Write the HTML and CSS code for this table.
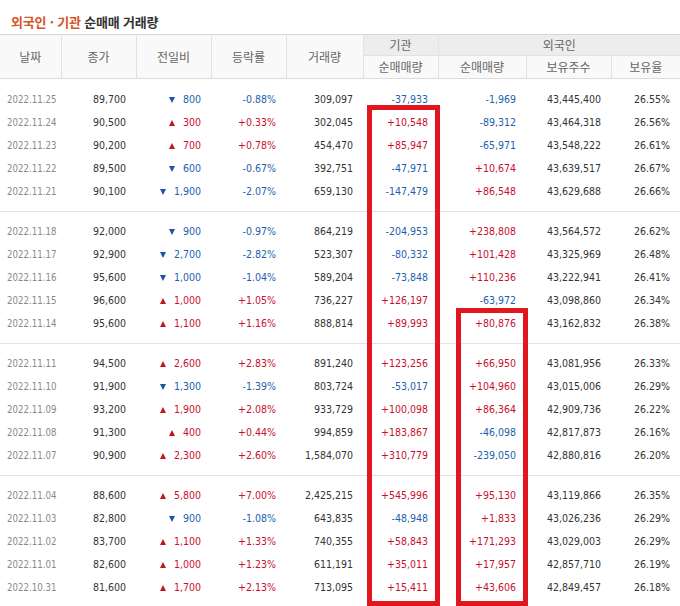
FILE: index.html
```html
<!DOCTYPE html>
<html lang="ko">
<head>
<meta charset="utf-8">
<title>외국인 · 기관 순매매 거래량</title>
<link rel="stylesheet" href="styles.css">
</head>
<body>
<div class="page">
  <h2 class="title"><span class="accent">외국인 · 기관</span> 순매매 거래량</h2>
  <table class="trade">
    <colgroup>
      <col class="c-date"><col class="c-close"><col class="c-diff"><col class="c-rate"><col class="c-vol">
      <col class="c-inst"><col class="c-fnet"><col class="c-hold"><col class="c-ratio">
    </colgroup>
    <thead>
      <tr class="h1">
        <th rowspan="2">날짜</th><th rowspan="2">종가</th><th rowspan="2">전일비</th><th rowspan="2">등락률</th><th rowspan="2">거래량</th>
        <th class="grp">기관</th><th class="grp" colspan="3">외국인</th>
      </tr>
      <tr class="h2">
        <th>순매매량</th><th>순매매량</th><th>보유주수</th><th>보유율</th>
      </tr>
    </thead>
    <tbody>
      <tr class="gap"><td colspan="9"></td></tr>
      <tr><td class="date">2022.11.25</td><td>89,700</td><td class="dn"><i class="tri-dn"></i>800</td><td class="dn">-0.88%</td><td>309,097</td><td class="dn">-37,933</td><td class="dn">-1,969</td><td>43,445,400</td><td>26.55%</td></tr>
      <tr><td class="date">2022.11.24</td><td>90,500</td><td class="up"><i class="tri-up"></i>300</td><td class="up">+0.33%</td><td>302,045</td><td class="up">+10,548</td><td class="dn">-89,312</td><td>43,464,318</td><td>26.56%</td></tr>
      <tr><td class="date">2022.11.23</td><td>90,200</td><td class="up"><i class="tri-up"></i>700</td><td class="up">+0.78%</td><td>454,470</td><td class="up">+85,947</td><td class="dn">-65,971</td><td>43,548,222</td><td>26.61%</td></tr>
      <tr><td class="date">2022.11.22</td><td>89,500</td><td class="dn"><i class="tri-dn"></i>600</td><td class="dn">-0.67%</td><td>392,751</td><td class="dn">-47,971</td><td class="up">+10,674</td><td>43,639,517</td><td>26.67%</td></tr>
      <tr><td class="date">2022.11.21</td><td>90,100</td><td class="dn"><i class="tri-dn"></i>1,900</td><td class="dn">-2.07%</td><td>659,130</td><td class="dn">-147,479</td><td class="up">+86,548</td><td>43,629,688</td><td>26.66%</td></tr>
      <tr class="sep"><td colspan="9"><div class="line"></div></td></tr>
      <tr><td class="date">2022.11.18</td><td>92,000</td><td class="dn"><i class="tri-dn"></i>900</td><td class="dn">-0.97%</td><td>864,219</td><td class="dn">-204,953</td><td class="up">+238,808</td><td>43,564,572</td><td>26.62%</td></tr>
      <tr><td class="date">2022.11.17</td><td>92,900</td><td class="dn"><i class="tri-dn"></i>2,700</td><td class="dn">-2.82%</td><td>523,307</td><td class="dn">-80,332</td><td class="up">+101,428</td><td>43,325,969</td><td>26.48%</td></tr>
      <tr><td class="date">2022.11.16</td><td>95,600</td><td class="dn"><i class="tri-dn"></i>1,000</td><td class="dn">-1.04%</td><td>589,204</td><td class="dn">-73,848</td><td class="up">+110,236</td><td>43,222,941</td><td>26.41%</td></tr>
      <tr><td class="date">2022.11.15</td><td>96,600</td><td class="up"><i class="tri-up"></i>1,000</td><td class="up">+1.05%</td><td>736,227</td><td class="up">+126,197</td><td class="dn">-63,972</td><td>43,098,860</td><td>26.34%</td></tr>
      <tr><td class="date">2022.11.14</td><td>95,600</td><td class="up"><i class="tri-up"></i>1,100</td><td class="up">+1.16%</td><td>888,814</td><td class="up">+89,993</td><td class="up">+80,876</td><td>43,162,832</td><td>26.38%</td></tr>
      <tr class="sep"><td colspan="9"><div class="line"></div></td></tr>
      <tr><td class="date">2022.11.11</td><td>94,500</td><td class="up"><i class="tri-up"></i>2,600</td><td class="up">+2.83%</td><td>891,240</td><td class="up">+123,256</td><td class="up">+66,950</td><td>43,081,956</td><td>26.33%</td></tr>
      <tr><td class="date">2022.11.10</td><td>91,900</td><td class="dn"><i class="tri-dn"></i>1,300</td><td class="dn">-1.39%</td><td>803,724</td><td class="dn">-53,017</td><td class="up">+104,960</td><td>43,015,006</td><td>26.29%</td></tr>
      <tr><td class="date">2022.11.09</td><td>93,200</td><td class="up"><i class="tri-up"></i>1,900</td><td class="up">+2.08%</td><td>933,729</td><td class="up">+100,098</td><td class="up">+86,364</td><td>42,909,736</td><td>26.22%</td></tr>
      <tr><td class="date">2022.11.08</td><td>91,300</td><td class="up"><i class="tri-up"></i>400</td><td class="up">+0.44%</td><td>994,859</td><td class="up">+183,867</td><td class="dn">-46,098</td><td>42,817,873</td><td>26.16%</td></tr>
      <tr><td class="date">2022.11.07</td><td>90,900</td><td class="up"><i class="tri-up"></i>2,300</td><td class="up">+2.60%</td><td>1,584,070</td><td class="up">+310,779</td><td class="dn">-239,050</td><td>42,880,816</td><td>26.20%</td></tr>
      <tr class="sep"><td colspan="9"><div class="line"></div></td></tr>
      <tr><td class="date">2022.11.04</td><td>88,600</td><td class="up"><i class="tri-up"></i>5,800</td><td class="up">+7.00%</td><td>2,425,215</td><td class="up">+545,996</td><td class="up">+95,130</td><td>43,119,866</td><td>26.35%</td></tr>
      <tr><td class="date">2022.11.03</td><td>82,800</td><td class="dn"><i class="tri-dn"></i>900</td><td class="dn">-1.08%</td><td>643,835</td><td class="dn">-48,948</td><td class="up">+1,833</td><td>43,026,236</td><td>26.29%</td></tr>
      <tr><td class="date">2022.11.02</td><td>83,700</td><td class="up"><i class="tri-up"></i>1,100</td><td class="up">+1.33%</td><td>740,355</td><td class="up">+58,843</td><td class="up">+171,293</td><td>43,029,003</td><td>26.29%</td></tr>
      <tr><td class="date">2022.11.01</td><td>82,600</td><td class="up"><i class="tri-up"></i>1,000</td><td class="up">+1.23%</td><td>611,191</td><td class="up">+35,011</td><td class="up">+17,957</td><td>42,857,710</td><td>26.19%</td></tr>
      <tr><td class="date">2022.10.31</td><td>81,600</td><td class="up"><i class="tri-up"></i>1,700</td><td class="up">+2.13%</td><td>713,095</td><td class="up">+15,411</td><td class="up">+43,606</td><td>42,849,457</td><td>26.18%</td></tr>
      <tr class="gap"><td colspan="9"></td></tr>
    </tbody>
  </table>
  <div class="mark mark-inst"></div>
  <div class="mark mark-foreign"></div>
</div>
</body>
</html>
```

FILE: styles.css
```css
html, body {
  margin: 0;
  padding: 0;
  background: #fff;
}
.page {
  position: relative;
  width: 680px;
}
.title {
  margin: 0;
  height: 34px;
  box-sizing: border-box;
  padding: 13px 0 0 11px;
  font-family: "Noto Sans CJK KR", "Noto Sans", sans-serif;
  font-size: 13px;
  line-height: 18px;
  font-weight: 700;
  color: #333;
  letter-spacing: -0.2px;
}
.title .accent {
  color: #d4552a;
}
.trade {
  width: 680px;
  border-collapse: collapse;
  table-layout: fixed;
  font-family: "DejaVu Sans Condensed", "DejaVu Sans", sans-serif;
  font-size: 10.5px;
  color: #333;
}
.c-date { width: 61px; }
.c-close { width: 75px; }
.c-diff { width: 75px; }
.c-rate { width: 75px; }
.c-vol { width: 77px; }
.c-inst { width: 75px; }
.c-fnet { width: 88px; }
.c-hold { width: 85px; }
.c-ratio { width: 69px; }

.trade thead th {
  font-family: "Noto Sans CJK KR", sans-serif;
  font-weight: 400;
  font-size: 12px;
  color: #666;
  background: #f9f9f9;
  border: 1px solid #e2e2e2;
  border-top-color: #d6d6d6;
  padding: 0;
  text-align: center;
}
.trade thead th:first-child { border-left: 0; }
.trade thead th:last-child { border-right: 0; }
.trade thead .h1 th { height: 20px; line-height: 18px; }
.trade thead .h1 th.grp { background: #ededed; }
.trade thead .h2 th { height: 22px; line-height: 20px; }
.trade thead .h2 th:last-child { border-right: 0; }
.trade thead tr:last-child th,
.trade thead th[rowspan] { border-bottom-color: #dcdcdc; }

.trade tbody td {
  height: 23px;
  padding: 0 10px 0 0;
  text-align: right;
  white-space: nowrap;
  line-height: 23px;
}
.trade tbody td.date {
  text-align: left;
  padding: 0 0 0 7px;
  font-size: 9.6px;
  color: #888;
}
.trade tbody tr.gap td { height: 9px; padding: 0; line-height: 0; }
.trade tbody tr.sep td { height: 17px; padding: 0; line-height: 0; }
.line {
  height: 1px;
  margin: 0;
  background: #e3e3e3;
}
.up { color: #c8102e; }
.dn { color: #1d5fae; }

.tri-up, .tri-dn {
  display: inline-block;
  width: 0;
  height: 0;
  border-left: 3.5px solid transparent;
  border-right: 3.5px solid transparent;
  margin-right: 8px;
  vertical-align: 0;
}
.tri-up { border-bottom: 6px solid #c41420; }
.tri-dn { border-top: 6px solid #1a56a6; }

.mark {
  position: absolute;
  border: 5px solid #e2161f;
  box-sizing: border-box;
}
.mark-inst {
  left: 367px;
  top: 105px;
  width: 73px;
  height: 501px;
}
.mark-foreign {
  left: 456px;
  top: 308px;
  width: 72px;
  height: 298px;
}
```
